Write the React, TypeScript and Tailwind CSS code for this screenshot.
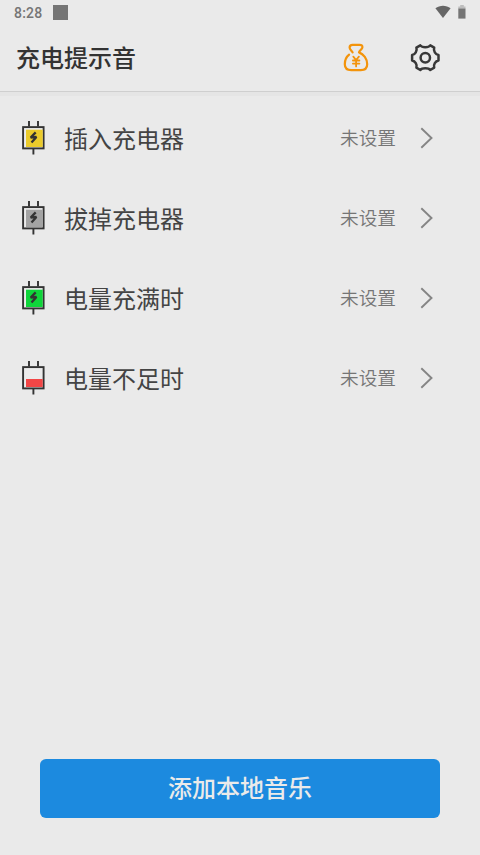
type Charge = { label: string; fill: string; low?: boolean };

const rows: Charge[] = [
  { label: "插入充电器", fill: "#ebcb2b" },
  { label: "拔掉充电器", fill: "#a3a3a3" },
  { label: "电量充满时", fill: "#0fd53a" },
  { label: "电量不足时", fill: "#f24646", low: true },
];

function BatteryIcon({ fill, low }: { fill: string; low?: boolean }) {
  return (
    <svg width="24" height="34" viewBox="0 0 24 34" fill="none" className="shrink-0">
      <path d="M8 0v5.5M17 0v5.5M12.4 28v5.5" stroke="#333" strokeWidth="1.9" />
      <rect x="2.1" y="6.1" width="20.5" height="21.3" fill="#ececec" stroke="#333" strokeWidth="1.9" />
      <rect x="5" y={low ? 18 : 8.7} width="16.7" height={low ? 8 : 17.3} fill={fill} />
      {!low && (
        <path d="M14.7 11.4L9.7 16.5L15.4 15.9L10.5 21.5" stroke="#333" strokeWidth="2.3" strokeLinejoin="bevel" />
      )}
    </svg>
  );
}

function MoneyBag() {
  return (
    <svg width="28" height="30" viewBox="342 43 28 30" fill="none" stroke="#f3940c" strokeWidth="2.2" strokeLinecap="round" strokeLinejoin="round">
      <path d="M352.6 52.4C351.7 50.4 349.6 49.6 349.6 47.4C349.6 45.6 350.9 44.8 352.6 44.8H359.6C361.4 44.8 362.6 45.7 362.4 47.3C362.2 49.3 359.8 50.1 359 52.4C363.6 54.1 367.2 58.9 367.2 64.2C367.2 68.3 364.7 70.1 360.8 70.1H351.3C347.3 70.1 344.8 68.3 344.8 64.2C344.8 60.3 346.4 56.8 349.1 54.7" />
      <path d="M353.3 56.6L356.1 60L358.9 56.6M352.9 60.5H359.4M352.9 63.6H359.4M356.1 60V66.4" strokeWidth="1.8" />
    </svg>
  );
}

function Gear() {
  return (
    <svg width="31" height="30" viewBox="0 0 31 30" fill="none" stroke="#383838" strokeWidth="2.5" strokeLinejoin="round">
      <path d="M10.3 2.4C12 4.9 18.6 4.9 20.3 2.4L24.2 4.7C23.2 7.8 25.4 11.4 28.5 12V17.4C25.4 18 23.2 21.6 24.2 24.7L20.3 27C18.6 24.5 12 24.5 10.3 27L6.4 24.7C7.4 21.6 5.2 18 2.1 17.4V12C5.2 11.4 7.4 7.8 6.4 4.7Z" />
      <circle cx="15.3" cy="14.7" r="4.7" />
    </svg>
  );
}

export default function App() {
  return (
    <div className="flex h-[855px] w-[480px] flex-col bg-[#eaeaea] font-['Noto_Sans_CJK_SC',sans-serif]">
      <div className="flex h-6 shrink-0 items-center pl-3.5 text-[#757575]">
        <span className="w-[39px] pt-px font-['Roboto',sans-serif] text-sm font-medium leading-6 tracking-[0.2px]">8:28</span>
        <div className="size-[15px] bg-[#757575]" />
        <svg className="ml-[367px]" width="16" height="14" viewBox="0 0 16 14" fill="#666">
          <path d="M.4 3.3C4.8-.1 11.2-.1 15.6 3.3L8 13Z" />
        </svg>
        <svg className="ml-[7px]" width="8" height="14" viewBox="0 0 8 14">
          <path d="M2.2 0h3.6v1.4H7.5V4H.3V1.4h1.9Z" fill="#bdbdbd" />
          <path d="M.3 3.6h7.2v10H.3Z" fill="#757575" />
        </svg>
      </div>
      <header className="flex h-[67px] shrink-0 items-center pl-4">
        <h1 className="w-[326px] pb-0.5 text-2xl font-medium leading-[66px] text-[#333]">充电提示音</h1>
        <MoneyBag />
        <div className="ml-10"><Gear /></div>
      </header>
      <div className="h-[5px] shrink-0 border-t border-[#cfcfcf] bg-[#e5e5e5]" />
      <main className="pt-0.5">
        {rows.map((row) => (
          <div key={row.label} className="flex h-20 items-center pl-[21px]">
            <BatteryIcon fill={row.fill} low={row.low} />
            <span className="ml-[19px] w-[276px] text-2xl leading-[80px] text-[#444]">{row.label}</span>
            <span className="w-[79px] pb-0.5 text-[18.7px] font-[350] leading-[78px] text-[#757575]">未设置</span>
            <svg width="16" height="24" viewBox="0 0 16 24" fill="none" stroke="#858585" strokeWidth="1.9">
              <path d="M2.3 2.2L12.5 12L2.3 21.8" />
            </svg>
          </div>
        ))}
      </main>
      <button className="mx-10 mt-auto mb-[37px] h-[59px] shrink-0 rounded-md bg-[#1c8adf] pb-[3px] text-2xl font-medium text-[#eaeaea]">
        添加本地音乐
      </button>
    </div>
  );
}
